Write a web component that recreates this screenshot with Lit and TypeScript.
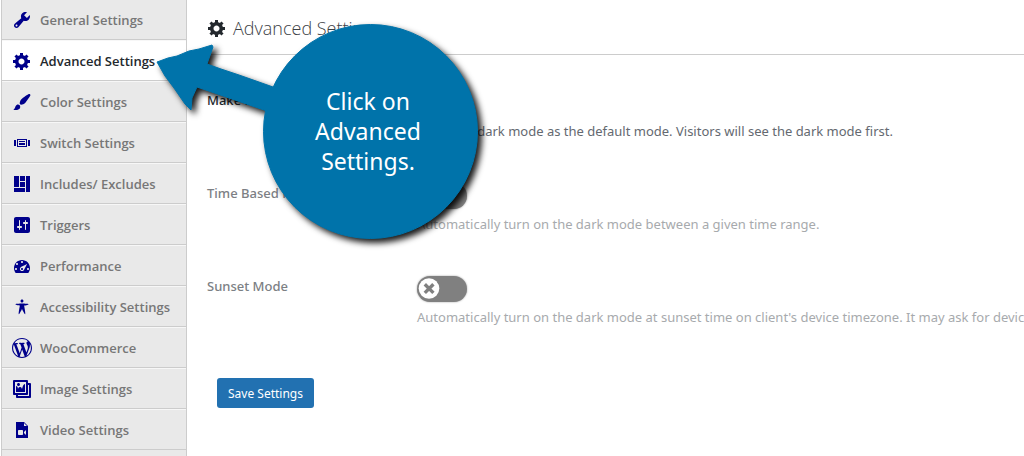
import { LitElement, html, css, svg } from "lit";
import { customElement, property } from "lit/decorators.js";
import { classMap } from "lit/directives/class-map.js";

const ICONS: Record<string, string> = {
  tools:
    "M16.68 9.77c-1.34 1.34-3.3 1.67-4.95.99l-5.41 6.52c-.99.99-2.59.99-3.58 0s-.99-2.59 0-3.57l6.52-5.42c-.68-1.65-.35-3.61.99-4.95 1.28-1.28 3.12-1.62 4.72-1.06l-2.89 2.89 2.82 2.82 2.86-2.87c.53 1.58.18 3.39-1.08 4.65zM3.81 16.21c.4.39 1.04.39 1.43 0 .4-.4.4-1.04 0-1.43-.39-.4-1.03-.4-1.43 0-.39.39-.39 1.03 0 1.43z",
  gear:
    "M18 12h-2.18c-.17.7-.44 1.35-.81 1.93l1.54 1.54-2.1 2.1-1.54-1.54c-.58.36-1.23.63-1.91.79V19H8v-2.18c-.68-.16-1.33-.43-1.91-.79l-1.54 1.54-2.12-2.12 1.54-1.54c-.36-.58-.63-1.23-.79-1.91H1V9.03h2.17c.16-.7.44-1.35.8-1.94L2.43 5.55l2.1-2.1 1.54 1.54c.58-.37 1.24-.64 1.93-.81V2h3v2.18c.68.16 1.33.43 1.91.79l1.54-1.54 2.12 2.12-1.54 1.54c.36.59.64 1.24.8 1.94H18V12zm-8.5 1.5c1.66 0 3-1.34 3-3s-1.34-3-3-3-3 1.34-3 3 1.34 3 3 3z",
  brush:
    "M18.33 3.57s.27-.8-.31-1.36c-.53-.52-1.22-.24-1.22-.24-.61.3-5.76 3.47-7.67 5.57-.86.96-2.06 3.79-1.09 4.82.92.98 3.96-.17 4.79-1 2.06-2.06 5.21-7.17 5.5-7.79zM1.4 17.65c2.37-1.56 1.46-3.41 3.23-4.64.93-.65 2.22-.62 3.08.29.63.67.8 2.57-.16 3.46-1.57 1.45-4 1.55-6.15.89z",
  slides:
    "M5 14V6h10v8H5zm-3-1V7h2v6H2zm4-6v6h8V7H6zm10 0h2v6h-2V7zm-3 2V8H7v1h6zm0 3v-2H7v2h6z",
  layout:
    "M2 2h5v11H2V2zm6 0h5v5H8V2zm6 0h4v16h-4V2zM8 8h5v5H8V8zm-6 6h11v4H2v-4z",
  sliders:
    "M18 16V4c0-1.1-.9-2-2-2H4c-1.1 0-2 .9-2 2v12c0 1.1.9 2 2 2h12c1.1 0 2-.9 2-2zM8 11h1c.55 0 1 .45 1 1s-.45 1-1 1H8v1.5c0 .28-.22.5-.5.5s-.5-.22-.5-.5V13H6c-.55 0-1-.45-1-1s.45-1 1-1h1V5.5c0-.28.22-.5.5-.5s.5.22.5.5V11zm5-2h-1c-.55 0-1-.45-1-1s.45-1 1-1h1V5.5c0-.28.22-.5.5-.5s.5.22.5.5V7h1c.55 0 1 .45 1 1s-.45 1-1 1h-1v5.5c0 .28-.22.5-.5.5s-.5-.22-.5-.5V9z",
  dashboard:
    "M3.76 17h12.48C17.34 15.63 18 13.9 18 12c0-4.41-3.58-8-8-8s-8 3.59-8 8c0 1.9.66 3.63 1.76 5zM9 6c0-.55.45-1 1-1s1 .45 1 1c0 .56-.45 1-1 1s-1-.44-1-1zM4 8c0-.55.45-1 1-1s1 .45 1 1c0 .56-.45 1-1 1s-1-.44-1-1zm4.52 3.4c.84-.83 6.51-3.5 6.51-3.5s-2.66 5.68-3.49 6.51c-.84.84-2.18.84-3.02 0-.83-.83-.83-2.18 0-3.01zM3 13c0-.55.45-1 1-1s1 .45 1 1c0 .56-.45 1-1 1s-1-.44-1-1zm6 0c0 .56.45 1 1 1 .56 0 1-.44 1-1 0-.55-.44-1-1-1-.55 0-1 .45-1 1zm6 0c0-.55.45-1 1-1s1 .45 1 1c0 .56-.45 1-1 1s-1-.44-1-1z",
  access:
    "M10 2.6c.83 0 1.5.67 1.5 1.5s-.67 1.51-1.5 1.51c-.82 0-1.5-.68-1.5-1.51s.68-1.5 1.5-1.5zM3.4 7.36c0-.65 6.6-.76 6.6-.76s6.6.11 6.6.76-4.47 1.4-4.47 1.4 1.69 8.14 1.06 8.38c-.62.24-3.19-5.19-3.19-5.19s-2.56 5.43-3.18 5.19c-.63-.24 1.06-8.38 1.06-8.38S3.4 8.01 3.4 7.36z",
  wordpress:
    "M20 10c0-5.51-4.49-10-10-10C4.48 0 0 4.49 0 10c0 5.52 4.48 10 10 10 5.51 0 10-4.48 10-10zM7.78 15.37L4.37 6.22c.55-.02 1.17-.08 1.17-.08.5-.06.44-1.13-.06-1.11 0 0-1.45.11-2.37.11-.18 0-.37 0-.58-.01C4.12 2.69 6.87 1.11 10 1.11c2.33 0 4.45.87 6.05 2.34-.68-.11-1.65.39-1.65 1.58 0 .74.45 1.36.9 2.1.35.61.55 1.36.55 2.46 0 1.49-1.4 5-1.4 5l-3.03-8.37c.54-.02.82-.17.82-.17.5-.05.44-1.25-.06-1.22 0 0-1.44.12-2.38.12-.87 0-2.33-.12-2.33-.12-.5-.03-.56 1.2-.06 1.22l.92.08 1.26 3.41zM17.41 10c.24-.64.74-1.87.43-4.25.7 1.29 1.05 2.71 1.05 4.25 0 3.29-1.73 6.24-4.4 7.78.97-2.59 1.94-5.2 2.92-7.78zM6.1 18.09C3.12 16.65 1.11 13.53 1.11 10c0-1.3.23-2.48.72-3.59C3.25 10.3 4.67 14.2 6.1 18.09zm4.03-6.63l2.58 6.98c-.86.29-1.76.45-2.71.45-.79 0-1.57-.11-2.29-.33.81-2.38 1.62-4.74 2.42-7.1z",
  gallery:
    "M16 4h1.96c.57 0 1.04.47 1.04 1.04v12.92c0 .57-.47 1.04-1.04 1.04H5.04C4.47 19 4 18.53 4 17.96V16H2.04C1.47 16 1 15.53 1 14.96V2.04C1 1.47 1.47 1 2.04 1h12.92c.57 0 1.04.47 1.04 1.04V4zM3 14h11V3H3v11zm5-8.5C8 4.67 7.33 4 6.5 4S5 4.67 5 5.5 5.67 7 6.5 7 8 6.33 8 5.5zm2 4.5s1-5 3-5v8H4V7c2 0 2 3 2 3s.33-2 2-2 2 2 2 2zm7 7V6h-1v8.96c0 .57-.47 1.04-1.04 1.04H6v1h11z",
  video:
    "M12 2l4 4v12H4V2h8zm0 4h3l-3-3v3zm-1 8v-3c0-.27-.1-.51-.29-.71-.2-.19-.44-.29-.71-.29H7c-.27 0-.51.1-.71.29-.19.2-.29.44-.29.71v3c0 .27.1.51.29.71.2.19.44.29.71.29h3c.27 0 .51-.1.71-.29.19-.2.29-.44.29-.71zm3 1v-5l-2 2v1z",
};

const TABS = [
  { icon: "tools", label: "General Settings" },
  { icon: "gear", label: "Advanced Settings", active: true },
  { icon: "brush", label: "Color Settings" },
  { icon: "slides", label: "Switch Settings" },
  { icon: "layout", label: "Includes/ Excludes" },
  { icon: "sliders", label: "Triggers" },
  { icon: "dashboard", label: "Performance" },
  { icon: "access", label: "Accessibility Settings" },
  { icon: "wordpress", label: "WooCommerce" },
  { icon: "gallery", label: "Image Settings" },
  { icon: "video", label: "Video Settings" },
];

const FIELDS = [
  {
    id: "default-mode",
    label: "Make Default",
    text: "Make the dark mode as the default mode. Visitors will see the dark mode first.",
    on: true,
  },
  {
    id: "time-mode",
    label: "Time Based Mode",
    text: "Automatically turn on the dark mode between a given time range.",
    on: false,
  },
  {
    id: "sunset-mode",
    label: "Sunset Mode",
    text: "Automatically turn on the dark mode at sunset time on client's device timezone. It may ask for device",
    on: false,
  },
];

const icon = (name: string) => html`
  <svg class="icon" viewBox="0 0 20 20" aria-hidden="true">
    ${svg`<path fill="currentColor" d=${ICONS[name]}></path>`}
  </svg>
`;

@customElement("toggle-field")
class ToggleField extends LitElement {
  @property() label = "";
  @property() text = "";
  @property() name = "";
  @property({ type: Boolean }) on = false;

  static styles = css`
    :host {
      display: grid;
      grid-template-columns: 210px minmax(0, 1fr);
      padding-bottom: 42px;
      font-size: 13px;
      line-height: 20px;
      color: #7c8084;
    }
    :host([on]) {
      color: #23282d;
    }
    .label {
      font-weight: 500;
    }
    .switch {
      display: grid;
      width: 50px;
      height: 26px;
      margin-bottom: 5px;
    }
    .box {
      appearance: none;
      grid-area: 1 / 1;
      margin: 0;
      border-radius: 13px;
      background: #808080;
      box-shadow: 0 0 2px #999;
    }
    .box:checked {
      background: #2271b1;
    }
    .knob {
      grid-area: 1 / 1;
      width: 26px;
      height: 26px;
      pointer-events: none;
    }
    .box:checked + .knob {
      justify-self: end;
    }
    .text {
      margin: 0;
      white-space: nowrap;
      color: #a7aaad;
    }
    :host([on]) .text {
      color: #646970;
    }
  `;

  render() {
    return html`
      <label class="label" for=${this.name}>${this.label}</label>
      <div>
        <div class="switch">
          <input class="box" type="checkbox" id=${this.name} .checked=${this.on} />
          <svg class="knob" viewBox="0 0 26 26" aria-hidden="true">
            <circle cx="12" cy="12.5" r="10.3" fill="#fff" />
            <path d="M7.8 8.3l8.6 8.6M16.4 8.3l-8.6 8.6" stroke="#808080" stroke-width="3.4" />
          </svg>
        </div>
        <p class="text">${this.text}</p>
      </div>
    `;
  }
}

@customElement("app-root")
class AppRoot extends LitElement {
  static styles = css`
    :host {
      display: block;
      font-family: "Noto Sans", "Open Sans", sans-serif;
      background: #fff;
    }
    .page {
      position: relative;
      display: flex;
      min-height: 100vh;
      padding-left: 1px;
      overflow: hidden;
      box-sizing: border-box;
    }
    .tabs {
      display: flex;
      flex-direction: column;
      flex: none;
      width: 186px;
      margin-top: -1px;
      box-sizing: border-box;
      border: 1px solid #ccc;
      border-width: 0 1px;
      background: #e9e9e9;
    }
    .tab {
      display: flex;
      align-items: center;
      gap: 8px;
      height: 41px;
      padding-left: 10px;
      box-sizing: border-box;
      border-top: 1px solid #f7f7f7;
      border-bottom: 1px solid #ccc;
      color: #777;
      font-family: "Open Sans", "Noto Sans", sans-serif;
      font-size: 13px;
      font-weight: 600;
      line-height: 20px;
      text-decoration: none;
      white-space: nowrap;
    }
    .tab.active {
      background: #fff;
      color: #23282d;
    }
    .icon {
      flex: none;
      width: 20px;
      height: 20px;
      color: #23282d;
    }
    .tab .icon {
      color: #00008b;
    }
    .main {
      flex: 1;
      min-width: 0;
      padding-left: 20px;
      overflow: hidden;
    }
    .title {
      display: flex;
      align-items: center;
      gap: 6px;
      height: 55px;
      margin: 0 0 35px;
      padding-top: 1px;
      box-sizing: border-box;
      border-bottom: 1px solid #ccc;
      color: #3c4146;
      font-family: "Open Sans", "Noto Sans", sans-serif;
      font-size: 18px;
      font-weight: 300;
      line-height: 24px;
    }
    .save {
      height: 30px;
      margin: 9px 0 0 10px;
      padding: 0 11px;
      border: 0;
      border-radius: 3px;
      background: #2271b1;
      color: #fff;
      font: inherit;
      font-size: 12px;
    }
    .callout {
      position: absolute;
      top: 0;
      left: 150px;
      width: 350px;
      height: 260px;
      pointer-events: none;
    }
    .shape {
      position: absolute;
      inset: 0;
      width: 100%;
      height: 100%;
      filter: drop-shadow(4px 4px 3px rgb(0 0 0 / 90%));
    }
    .message {
      position: absolute;
      top: 86px;
      left: 148px;
      width: 140px;
      margin: 0;
      color: #fff;
      font-size: 23px;
      line-height: 30px;
      text-align: center;
    }
  `;

  render() {
    return html`
      <div class="page">
        <nav class="tabs">
          ${TABS.map(
            (t) => html`<a class=${classMap({ tab: true, active: !!t.active })} href="#">${icon(t.icon)}<span>${t.label}</span></a>`
          )}
        </nav>
        <main class="main">
          <h2 class="title">${icon("gear")}<span>Advanced Settings</span></h2>
          ${FIELDS.map(
            (f) => html`<toggle-field name=${f.id} label=${f.label} text=${f.text} ?on=${f.on}></toggle-field>`
          )}
          <button class="save" type="button">Save Settings</button>
        </main>
        <div class="callout">
          <svg class="shape" viewBox="150 0 350 260" aria-hidden="true">
            <g fill="#0073aa" stroke="#0073aa" stroke-linejoin="round">
              <circle cx="370.5" cy="131.5" r="107" />
              <path d="M157 62l11-4 9-2 12-5 10-2 13-4 1 2-6 17 14 5 18 6 34 12 20 10-8 20-24-8-64-22-5 11-1 12-6-6-11-16-9-12z" />
            </g>
          </svg>
          <p class="message">Click on<br />Advanced<br />Settings.</p>
        </div>
      </div>
    `;
  }
}
